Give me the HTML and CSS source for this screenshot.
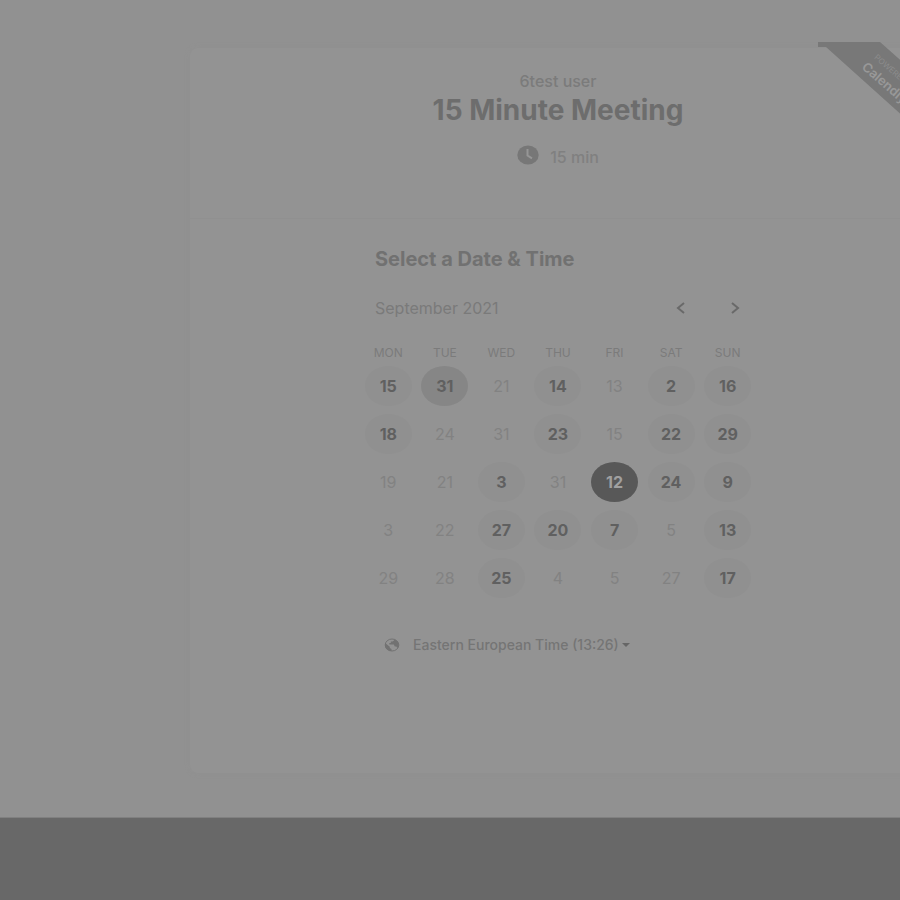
FILE: index.html
```html
<!DOCTYPE html>
<html lang="en">
<head>
<meta charset="utf-8">
<title>15 Minute Meeting</title>
<link rel="stylesheet" href="styles.css">
</head>
<body>
<main class="page">
  <section class="card">
    <header class="event">
      <p class="host">6test user</p>
      <h1 class="title">15 Minute Meeting</h1>
      <p class="duration">
        <svg class="clock" viewBox="0 0 22 20" aria-hidden="true"><ellipse cx="11" cy="10" rx="10.7" ry="9.6"/><path d="M10.5 4v6.5l4.5 2.800"/></svg>
        <span>15 min</span>
      </p>
    </header>
    <div class="booking">
      <h2 class="heading">Select a Date &amp; Time</h2>
      <div class="month">
        <span class="month-name">September 2021</span>
        <button class="arrow" type="button" aria-label="Previous month"><svg viewBox="0 0 10 12"><path d="M8 1 2 6l6 5"/></svg></button>
        <button class="arrow" type="button" aria-label="Next month"><svg viewBox="0 0 10 12"><path d="m2 1 6 5-6 5"/></svg></button>
      </div>
      <table class="days">
        <thead>
          <tr><th>MON</th><th>TUE</th><th>WED</th><th>THU</th><th>FRI</th><th>SAT</th><th>SUN</th></tr>
        </thead>
        <tbody>
          <tr><td><button class="day">15</button></td><td><button class="day hover">31</button></td><td>21</td><td><button class="day">14</button></td><td>13</td><td><button class="day">2</button></td><td><button class="day">16</button></td></tr>
          <tr><td><button class="day">18</button></td><td>24</td><td>31</td><td><button class="day">23</button></td><td>15</td><td><button class="day">22</button></td><td><button class="day">29</button></td></tr>
          <tr><td>19</td><td>21</td><td><button class="day">3</button></td><td>31</td><td><button class="day selected">12</button></td><td><button class="day">24</button></td><td><button class="day">9</button></td></tr>
          <tr><td>3</td><td>22</td><td><button class="day">27</button></td><td><button class="day">20</button></td><td><button class="day">7</button></td><td>5</td><td><button class="day">13</button></td></tr>
          <tr><td>29</td><td>28</td><td><button class="day">25</button></td><td>4</td><td>5</td><td>27</td><td><button class="day">17</button></td></tr>
        </tbody>
      </table>
      <button class="timezone" type="button">
        <svg class="globe" viewBox="0 0 16 14" aria-hidden="true"><ellipse class="rim" cx="8" cy="7" rx="6.800" ry="6"/><path d="M1.2 5 5.800 8.800v1.200l1.700 1V13C3.500 13 1 10.500 1 7zM10 1.300v1.200L8.500 3.600H6.800v1.400H5.300v1.400h4.500l1 2.200h1.600l1 1.700C16 7.500 14.800 2.800 10 1.300z"/></svg>
        <span>Eastern European Time (13:26)</span>
        <svg class="caret" viewBox="0 0 8 4" aria-hidden="true"><path d="M0 0h8L4 4z"/></svg>
      </button>
    </div>
    <a class="ribbon" href="#"><span class="ribbon-text"><small>POWERED BY</small><strong>Calendly</strong></span></a>
  </section>
</main>
<footer class="footer"></footer>
</body>
</html>
```
FILE: styles.css
```css
* { box-sizing: border-box; }
body {
  margin: 0;
  min-height: 100vh;
  display: flex;
  flex-direction: column;
  overflow: hidden;
  background: #919191;
  color: #737373;
  font-family: Inter, "Liberation Sans", sans-serif;
}
h1, h2, p { margin: 0; }
button { border: 0; padding: 0; background: none; color: inherit; font: inherit; cursor: pointer; }
.page { padding: 48px 0 44px 190px; border-bottom: 1px solid #808080; }
.card {
  position: relative;
  margin-right: -26px;
  min-height: 725px;
  border-radius: 8px;
  background: #939393;
  box-shadow: 0 0 5px #909090;
}
.event {
  display: flex;
  flex-direction: column;
  align-items: center;
  height: 171px;
  padding-top: 23px;
  border-bottom: 1px solid #909090;
}
.host { font-size: 16px; line-height: 20px; font-weight: 500; color: #7b7b7b; }
.title { margin-top: 1px; font-size: 28px; line-height: 36px; font-weight: 700; color: #6d6d6d; }
.duration { display: flex; align-items: center; gap: 11px; margin-top: 17px; font-size: 16px; line-height: 24px; font-weight: 500; color: #808080; }
.clock { width: 22px; height: 20px; margin-bottom: 4px; fill: #777; }
.clock path { fill: none; stroke: #969696; stroke-width: 2; }
.booking { display: flex; flex-direction: column; width: 396px; margin: 0 auto; padding-top: 28px; }
.heading { padding-left: 15px; font-size: 20px; line-height: 24px; font-weight: 700; color: #717171; }
.month { display: flex; align-items: center; height: 24px; margin-top: 25px; padding: 0 5px 0 15px; font-size: 16px; color: #7a7a7a; }
.month-name { flex: 1; }
.arrow { display: grid; place-items: center; width: 32px; height: 24px; }
.arrow + .arrow { margin-left: 22px; }
.arrow svg { width: 10px; height: 12px; fill: none; stroke: #696969; stroke-width: 2; }
.days { width: 100%; margin-top: 22px; border-collapse: collapse; table-layout: fixed; text-align: center; }
.days th { height: 20px; padding: 0; font-size: 12px; font-weight: 400; color: #7b7b7b; }
.days td { height: 48px; padding: 0; font-size: 16px; line-height: 20px; color: #828282; }
.day { display: block; width: 47px; height: 40px; margin: 0 auto; border-radius: 50%; background: #909090; color: #606060; font-weight: 700; }
.hover { background: #868686; }
.selected { background: #585858; color: #a0a0a0; }
.timezone { display: flex; align-items: center; margin: 33px 0 0 24px; font-size: 14px; line-height: 20px; font-weight: 500; color: #757575; }
.globe { width: 16px; height: 14px; margin-right: 13px; fill: #727272; }
.rim { fill: none; stroke: #727272; stroke-width: 1; }
.caret { width: 8px; height: 4px; margin-left: 3px; fill: #666; }
.ribbon {
  position: absolute;
  top: -6px;
  right: 0;
  width: 108px;
  height: 95px;
  background: #787878;
  clip-path: polygon(0 0, 62px 0, 100% 41px, 100% 100%, 8px 5px, 0 5px);
  color: #989898;
  text-decoration: none;
}
.ribbon-text { position: absolute; top: 10px; left: 61px; display: block; transform: rotate(41deg); transform-origin: 0 0; white-space: nowrap; }
.ribbon small { display: block; font-size: 8px; line-height: 10px; color: #8c8c8c; }
.ribbon strong { display: block; margin-left: -3px; font-size: 13px; line-height: 18px; font-weight: 600; }
.footer { flex: 1; min-height: 82px; background: #686868; }
```
